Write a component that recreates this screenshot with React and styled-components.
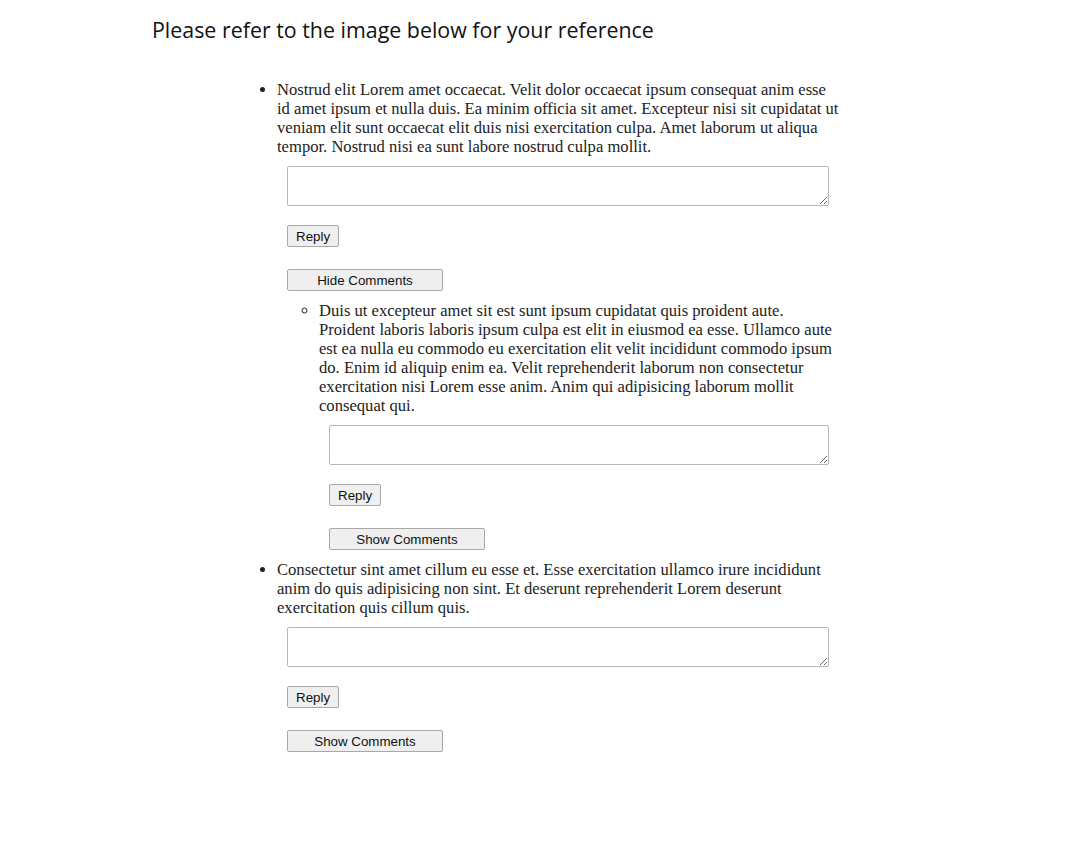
import React, { useState } from 'react'
import styled, { createGlobalStyle } from 'styled-components'

const GlobalStyle = createGlobalStyle`
  body {
    margin: 0;
    background: #ffffff;
    font-family: "Liberation Serif", "Times New Roman", serif;
    color: #222;
  }
`

const Page = styled.div`
  padding: 14px 0 40px;
`

const Heading = styled.h1`
  margin: 0 0 0 152px;
  font-family: "Open Sans", Lato, sans-serif;
  font-weight: 400;
  font-size: 21.4px;
  line-height: 32px;
  color: #111;
`

const Thread = styled.div`
  width: 602px;
  margin: 34px 0 0 237px;
`

const List = styled.ul`
  margin: 0;
  padding-left: ${p => (p.nested ? '42px' : '40px')};
  list-style-type: ${p => (p.nested ? 'circle' : 'disc')};
`

const Item = styled.li`
  font-size: 16.6px;
  line-height: 19px;
  padding-bottom: ${p => (p.nested ? '0' : '10px')};
`

const Body = styled.div`
  margin: 0;
`

const ReplyBox = styled.textarea`
  display: block;
  box-sizing: border-box;
  width: calc(100% - 20px);
  height: 40px;
  margin: 10px 10px 0;
  border: 1px solid #b7b7b7;
  border-radius: 2px;
  font-family: "Liberation Mono", monospace;
`

const Button = styled.button`
  display: block;
  box-sizing: border-box;
  height: 22px;
  width: ${p => (p.wide ? '156px' : 'auto')};
  margin: ${p => (p.wide ? '22px' : '19px')} 10px 0;
  padding: 1px 8px;
  font-family: "Liberation Sans", Arial, sans-serif;
  font-size: 13.33px;
  color: #111;
  background: #efefef;
  border: 1px solid #a8a8a8;
  border-radius: 2px;
`

const Children = styled.div`
  margin-top: 10px;
`

const comments = [
  {
    id: 1,
    text: 'Nostrud elit Lorem amet occaecat. Velit dolor occaecat ipsum consequat anim esse id amet ipsum et nulla duis. Ea minim officia sit amet. Excepteur nisi sit cupidatat ut veniam elit sunt occaecat elit duis nisi exercitation culpa. Amet laborum ut aliqua tempor. Nostrud nisi ea sunt labore nostrud culpa mollit.',
    open: true,
    replies: [
      {
        id: 2,
        text: 'Duis ut excepteur amet sit est sunt ipsum cupidatat quis proident aute. Proident laboris laboris ipsum culpa est elit in eiusmod ea esse. Ullamco aute est ea nulla eu commodo eu exercitation elit velit incididunt commodo ipsum do. Enim id aliquip enim ea. Velit reprehenderit laborum non consectetur exercitation nisi Lorem esse anim. Anim qui adipisicing laborum mollit consequat qui.',
        open: false,
        replies: [],
      },
    ],
  },
  {
    id: 3,
    text: 'Consectetur sint amet cillum eu esse et. Esse exercitation ullamco irure incididunt anim do quis adipisicing non sint. Et deserunt reprehenderit Lorem deserunt exercitation quis cillum quis.',
    open: false,
    replies: [],
  },
]

const Comment = ({ comment, nested }) => {
  const [open, setOpen] = useState(comment.open)
  return (
    <Item nested={nested}>
      <Body>{comment.text}</Body>
      <ReplyBox />
      <Button>Reply</Button>
      <Button wide onClick={() => setOpen(!open)}>
        {open ? 'Hide Comments' : 'Show Comments'}
      </Button>
      {open && comment.replies.length > 0 && (
        <Children>
          <List nested>
            {comment.replies.map(r => (
              <Comment key={r.id} comment={r} nested />
            ))}
          </List>
        </Children>
      )}
    </Item>
  )
}

export default function App() {
  return (
    <Page>
      <GlobalStyle />
      <Heading>Please refer to the image below for your reference</Heading>
      <Thread>
        <List>
          {comments.map(c => (
            <Comment key={c.id} comment={c} />
          ))}
        </List>
      </Thread>
    </Page>
  )
}
